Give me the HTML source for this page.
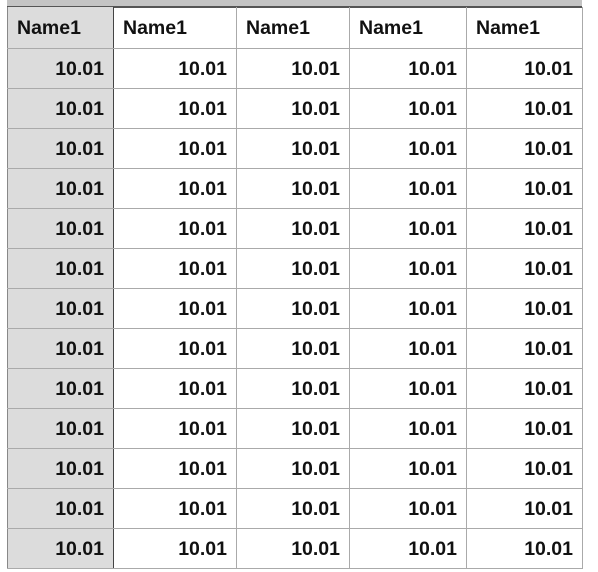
<!DOCTYPE html><html><head><style>
body{margin:0;width:598px;height:572px;overflow:hidden;background:#fff;font-family:"Liberation Sans",Arial,sans-serif;font-weight:bold;font-size:19.5px;color:#111;position:relative}
.band{position:absolute;left:7px;top:0;width:575px;height:8px;background:#c4c4c4;border-bottom:2px solid #555;box-sizing:border-box}
table{position:absolute;left:7px;top:7px;border-collapse:collapse;table-layout:fixed}
td{border:1px solid #aaa;height:40px;padding:3px 9px 0 9px;box-sizing:border-box;text-align:right;white-space:nowrap}
tr:first-child td{text-align:left;height:41px;border-top:none}
td:first-child{background:#dcdcdc;border-left:1px solid #888;border-right:1px solid #444}
</style></head><body>
<div class="band"></div>
<table>
<colgroup><col style="width:106px"><col style="width:123px"><col style="width:113px"><col style="width:117px"><col style="width:116px"></colgroup>
<tr><td>Name1</td><td>Name1</td><td>Name1</td><td>Name1</td><td>Name1</td></tr>
<tr><td>10.01</td><td>10.01</td><td>10.01</td><td>10.01</td><td>10.01</td></tr>
<tr><td>10.01</td><td>10.01</td><td>10.01</td><td>10.01</td><td>10.01</td></tr>
<tr><td>10.01</td><td>10.01</td><td>10.01</td><td>10.01</td><td>10.01</td></tr>
<tr><td>10.01</td><td>10.01</td><td>10.01</td><td>10.01</td><td>10.01</td></tr>
<tr><td>10.01</td><td>10.01</td><td>10.01</td><td>10.01</td><td>10.01</td></tr>
<tr><td>10.01</td><td>10.01</td><td>10.01</td><td>10.01</td><td>10.01</td></tr>
<tr><td>10.01</td><td>10.01</td><td>10.01</td><td>10.01</td><td>10.01</td></tr>
<tr><td>10.01</td><td>10.01</td><td>10.01</td><td>10.01</td><td>10.01</td></tr>
<tr><td>10.01</td><td>10.01</td><td>10.01</td><td>10.01</td><td>10.01</td></tr>
<tr><td>10.01</td><td>10.01</td><td>10.01</td><td>10.01</td><td>10.01</td></tr>
<tr><td>10.01</td><td>10.01</td><td>10.01</td><td>10.01</td><td>10.01</td></tr>
<tr><td>10.01</td><td>10.01</td><td>10.01</td><td>10.01</td><td>10.01</td></tr>
<tr><td>10.01</td><td>10.01</td><td>10.01</td><td>10.01</td><td>10.01</td></tr>
</table>
</body></html>
